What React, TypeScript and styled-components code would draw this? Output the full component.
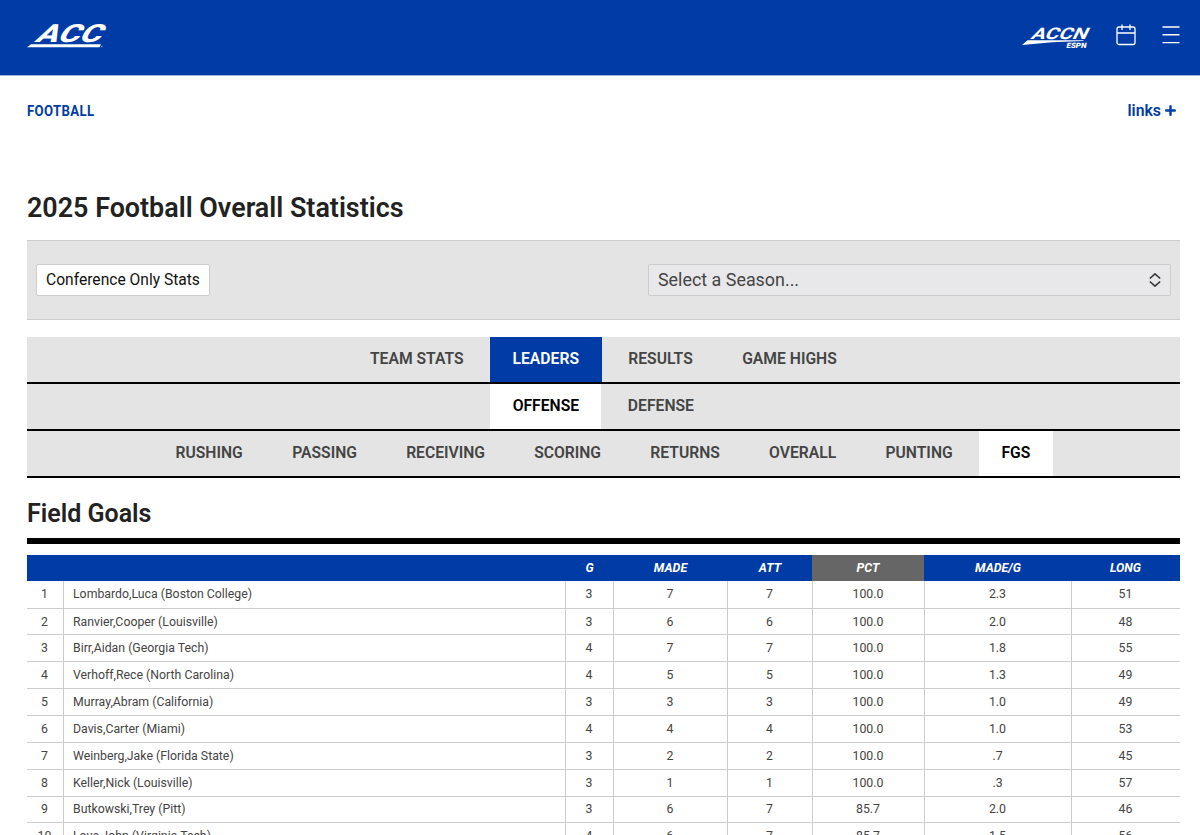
import React from "react";
import styled, { createGlobalStyle } from "styled-components";

const BLUE = "#013ca6";

const Global = createGlobalStyle`
  * { box-sizing: border-box; }
  html, body { margin: 0; padding: 0; background: #fff; overflow: hidden; }
  body { font-family: Roboto, "Liberation Sans", sans-serif; color: #222; }
`;
const Page = styled.div`
  width: 1200px;
  height: 835px;
  overflow: hidden;
`;
const Header = styled.header`
  height: 75px;
  padding: 0 20px 0 27px;
  background: ${BLUE};
  box-shadow: 0 1px 0 #9db4e0;
  display: flex;
  align-items: flex-start;
  justify-content: space-between;
`;
const HeaderTools = styled.div`
  display: flex;
  align-items: flex-start;
  height: 100%;
`;
const AccMark = styled.svg`
  width: 80px;
  height: 27px;
  margin-top: 22px;
  overflow: visible;
`;
const AccnMark = styled.svg`
  width: 70px;
  height: 26px;
  margin: 24px 24px 0 0;
  overflow: visible;
`;
const CalendarIcon = styled.svg`
  width: 20px;
  height: 22px;
  margin: 24px 26px 0 0;
`;
const MenuIcon = styled.svg`
  width: 18px;
  height: 20px;
  margin-top: 25px;
`;
const SubNav = styled.nav`
  height: 72px;
  padding: 0 24px 0 27px;
  display: flex;
  align-items: center;
  justify-content: space-between;
  color: ${BLUE};
`;
const SportName = styled.span`
  font-size: 15.5px;
  font-weight: 700;
  letter-spacing: 0.4px;
  transform: scaleX(0.85);
  transform-origin: left center;
`;
const LinksToggle = styled.span`
  display: flex;
  align-items: center;
  gap: 4px;
  line-height: 18px;
  padding-bottom: 1px;
  font-size: 15.8px;
  font-weight: 600;
`;
const PlusIcon = styled.svg`
  width: 11px;
  height: 11px;
`;
const Main = styled.main`
  padding: 43px 20px 0 27px;
`;
const Title = styled.h1`
  margin: 0;
  height: 50px;
  line-height: 36px;
  font-size: 26.9px;
  font-weight: 600;
`;
const FilterBar = styled.section`
  height: 80px;
  padding: 0 9px;
  display: flex;
  align-items: center;
  justify-content: space-between;
  background: #e4e4e4;
  border-top: 1px solid #ccc;
  border-bottom: 1px solid #ccc;
`;
const StatsButton = styled.button`
  height: 32px;
  width: 174px;
  padding: 0;
  border: 1px solid #ccc;
  border-radius: 2px;
  background: #fff;
  color: #111;
  font: 400 15.6px Roboto, sans-serif;
`;
const SeasonSelect = styled.div`
  width: 523px;
  height: 32px;
  padding: 0 9px;
  display: flex;
  align-items: center;
  justify-content: space-between;
  border: 1px solid #ccc;
  border-radius: 2px;
  background: #e8e8ea;
  color: #444;
  font-size: 17.9px;
  line-height: 30px;
`;
const Chevrons = styled.svg`
  width: 12px;
  height: 14px;
`;
const TabGroup = styled.div`
  margin-top: 17px;
`;
const TabBar = styled.div<{ $shift?: number }>`
  height: 47px;
  padding-left: ${(p) => p.$shift ?? 0}px;
  display: flex;
  background: #e4e4e4;
  border-bottom: 2px solid #000;
`;
const Tab = styled.div<{ $w: number; $active?: "blue" | "white" }>`
  width: ${(p) => p.$w}px;
  height: 100%;
  padding-bottom: 2px;
  display: flex;
  align-items: center;
  justify-content: center;
  font-size: 15.7px;
  font-weight: 600;
  background: ${(p) => (p.$active === "blue" ? BLUE : p.$active === "white" ? "#fff" : "transparent")};
  color: ${(p) => (p.$active === "blue" ? "#fff" : p.$active === "white" ? "#000" : "#444")};
`;
const SectionTitle = styled.h2`
  margin: 0;
  height: 66px;
  padding-top: 18px;
  line-height: 36px;
  font-size: 25px;
  font-weight: 600;
  border-bottom: 6px solid #000;
`;
const COLS = "37px 502px 48px 114px 85px 112px 147px 108px";
const Table = styled.div`
  margin-top: 11px;
`;
const HeadRow = styled.div`
  height: 26px;
  display: grid;
  grid-template-columns: ${COLS};
  background: ${BLUE};
  color: #fff;
  font-size: 12.4px;
  font-weight: 700;
  font-style: italic;
`;
const HeadCell = styled.div<{ $sorted?: boolean }>`
  display: flex;
  align-items: center;
  justify-content: center;
  padding-bottom: 1px;
  margin-left: -1px;
  margin-right: ${(p) => (p.$sorted ? 1 : 0)}px;
  background: ${(p) => (p.$sorted ? "#666" : "transparent")};
`;
const Row = styled.div`
  height: 26.85px;
  display: grid;
  grid-template-columns: ${COLS};
  border-bottom: 1px solid #ccc;
  font-size: 12.3px;
  color: #444;
  &:nth-child(2) { height: 27.6px; }
`;
const Cell = styled.div<{ $left?: boolean }>`
  display: flex;
  align-items: center;
  justify-content: ${(p) => (p.$left ? "flex-start" : "center")};
  padding-left: ${(p) => (p.$left ? 9 : 0)}px;
  padding-right: ${(p) => (p.$left ? 0 : 1)}px;
  border-right: 1px solid #ccc;
  white-space: pre;
  &:last-child { border-right: 0; }
`;

const primaryTabs: [string, number][] = [["TEAM STATS", 146.5], ["LEADERS", 111.5], ["RESULTS", 118], ["GAME HIGHS", 140]];
const sideTabs: [string, number][] = [["OFFENSE", 111], ["DEFENSE", 119]];
const categoryTabs: [string, number][] = [
  ["RUSHING", 116], ["PASSING", 115], ["RECEIVING", 127], ["SCORING", 117],
  ["RETURNS", 118], ["OVERALL", 117], ["PUNTING", 116], ["FGS", 74],
];
const Gap = styled.span`
  width: 1.8px;
`;
const heads = ["", "", "G", "MADE", "ATT", "PCT", "MADE/G", "LONG"];
const rows = [
  ["1", "Lombardo,Luca (Boston College)", "3", "7", "7", "100.0", "2.3", "51"],
  ["2", "Ranvier,Cooper (Louisville)", "3", "6", "6", "100.0", "2.0", "48"],
  ["3", "Birr,Aidan (Georgia Tech)", "4", "7", "7", "100.0", "1.8", "55"],
  ["4", "Verhoff,Rece (North Carolina)", "4", "5", "5", "100.0", "1.3", "49"],
  ["5", "Murray,Abram (California)", "3", "3", "3", "100.0", "1.0", "49"],
  ["6", "Davis,Carter (Miami)", "4", "4", "4", "100.0", "1.0", "53"],
  ["7", "Weinberg,Jake (Florida State)", "3", "2", "2", "100.0", ".7", "45"],
  ["8", "Keller,Nick (Louisville)", "3", "1", "1", "100.0", ".3", "57"],
  ["9", "Butkowski,Trey (Pitt)", "3", "6", "7", "85.7", "2.0", "46"],
  ["10", "Love,John (Virginia Tech)", "4", "6", "7", "85.7", "1.5", "56"],
];

export default function App() {
  return (
    <Page>
      <Global />
      <Header>
        <AccMark viewBox="0 0 80 27" fill="#fff">
          <g transform="translate(7 20) skewX(-31)" fontFamily="Roboto" fontWeight="800" fontSize="25">
            <text x="0" y="0" textLength="65" lengthAdjust="spacingAndGlyphs">ACC</text>
          </g>
          <path d="M4 22.200H74L72.500 25.200H0Z" />
          <rect x="74" y="24.200" width="1.500" height="1" opacity=".6" />
        </AccMark>
        <HeaderTools>
          <AccnMark viewBox="0 0 70 26" fill="#fff">
            <g transform="translate(8 14.500) skewX(-26)" fontFamily="Roboto" fontWeight="700" fontSize="16">
              <text x="0" y="0" textLength="56" lengthAdjust="spacingAndGlyphs">ACCN</text>
            </g>
            <path d="M5.500 16.300H62L61 17Q30 17.500 0 21Z" />
            <g transform="translate(44 23.500) skewX(-12)" fontFamily="Roboto" fontWeight="900" fontSize="7.500">
              <text x="0" y="0" textLength="20" lengthAdjust="spacingAndGlyphs">ESPN</text>
            </g>
          </AccnMark>
          <CalendarIcon viewBox="0 0 20 22" fill="none" stroke="#fff" strokeWidth="1.300">
            <rect x="1" y="3" width="18" height="17.500" rx="2" />
            <path d="M1 9H19M6 .5V6M14 .5V6" />
          </CalendarIcon>
          <MenuIcon viewBox="0 0 18 20" stroke="#fff" strokeWidth="1.400">
            <path d="M.5 2H17.500M.5 9.800H17.500M.5 17.600H17.500" />
          </MenuIcon>
        </HeaderTools>
      </Header>
      <SubNav>
        <SportName>FOOTBALL</SportName>
        <LinksToggle>
          links
          <PlusIcon viewBox="0 0 11 11" stroke={BLUE} strokeWidth="2.400" strokeLinecap="round">
            <path d="M5.500 1.200V9.800M1.200 5.500H9.800" />
          </PlusIcon>
        </LinksToggle>
      </SubNav>
      <Main>
        <Title>2025 Football Overall Statistics</Title>
        <FilterBar>
          <StatsButton>Conference Only Stats</StatsButton>
          <SeasonSelect>
            Select a Season...
            <Chevrons viewBox="0 0 12 14" fill="none" stroke="#333" strokeWidth="1.600">
              <path d="M.8 5.500L6 .9L11.200 5.500M.8 8.500L6 13.100L11.200 8.500" />
            </Chevrons>
          </SeasonSelect>
        </FilterBar>
        <TabGroup>
          <TabBar $shift={316.5}>
            {primaryTabs.map(([t, w]) => <Tab key={t} $w={w} $active={t === "LEADERS" ? "blue" : undefined}>{t}</Tab>)}
          </TabBar>
          <TabBar $shift={463.4}>
            {sideTabs.map(([t, w]) => <Tab key={t} $w={w} $active={t === "OFFENSE" ? "white" : undefined}>{t}</Tab>)}
          </TabBar>
          <TabBar $shift={124.1}>
            {categoryTabs.map(([t, w]) => (
              <React.Fragment key={t}>
                {t === "FGS" && <Gap />}
                <Tab $w={w} $active={t === "FGS" ? "white" : undefined}>{t}</Tab>
              </React.Fragment>
            ))}
          </TabBar>
        </TabGroup>
        <SectionTitle>Field Goals</SectionTitle>
        <Table>
          <HeadRow>
            {heads.map((h, i) => <HeadCell key={i} $sorted={h === "PCT"}>{h}</HeadCell>)}
          </HeadRow>
          {rows.map((r) => (
            <Row key={r[0]}>
              {r.map((c, i) => <Cell key={i} $left={i === 1}>{c}</Cell>)}
            </Row>
          ))}
        </Table>
      </Main>
    </Page>
  );
}
